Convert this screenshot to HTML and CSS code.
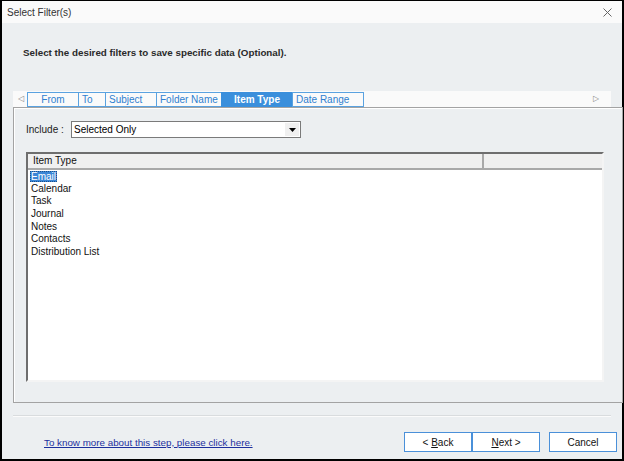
FILE: index.html
```html
<!DOCTYPE html>
<html>
<head>
<meta charset="utf-8">
<link rel="stylesheet" href="styles.css">
</head>
<body>
<div class="window">
  <div class="titlebar">
    <span class="title">Select Filter(s)</span>
    <svg class="close" width="9" height="9" viewBox="0 0 9 9"><path d="M0.5 0.5 L8.5 8.5 M8.5 0.5 L0.5 8.5" stroke="#666" stroke-width="1" fill="none"/></svg>
  </div>
  <div class="content">
    <div class="heading">Select the desired filters to save specific data (Optional).</div>
    <div class="tabstrip">
      <span class="arrow left">&#9665;</span>
      <div class="tabs">
        <span class="tab center w52">From</span>
        <span class="tab w28">To</span>
        <span class="tab w52">Subject</span>
        <span class="tab w66">Folder Name</span>
        <span class="tab center active w72">Item Type</span>
        <span class="tab w72">Date Range</span>
      </div>
      <span class="arrow right">&#9655;</span>
    </div>
    <div class="panel">
      <div class="include-row">
        <span class="include-label">Include :</span>
        <div class="select">
          <span class="select-text">Selected Only</span>
          <span class="select-btn"><svg width="7" height="4" viewBox="0 0 7 4"><path d="M0 0 H7 L3.5 4 Z" fill="#000"/></svg></span>
        </div>
      </div>
      <div class="listview">
        <div class="lv-header">
          <span class="col col1">Item Type</span>
          <span class="col col2"></span>
        </div>
        <div class="lv-body">
          <div class="row"><span class="sel">Email</span></div>
          <div class="row">Calendar</div>
          <div class="row">Task</div>
          <div class="row">Journal</div>
          <div class="row">Notes</div>
          <div class="row">Contacts</div>
          <div class="row">Distribution List</div>
        </div>
      </div>
    </div>
    <div class="separator"></div>
    <div class="footer">
      <a class="help" href="#">To know more about this step, please click here.</a>
      <div class="buttons">
        <div class="btn-pair">
          <span class="btn"><span>&lt; <u>B</u>ack</span></span>
          <span class="btn"><span><u>N</u>ext &gt;</span></span>
        </div>
        <span class="btn"><span>Cancel</span></span>
      </div>
    </div>
  </div>
</div>
</body>
</html>
```
FILE: styles.css
```css
html, body {
  margin: 0;
  padding: 0;
}
body {
  background: #000;
  width: 624px;
  height: 461px;
  overflow: hidden;
  font-family: "Liberation Sans", Arial, sans-serif;
  font-size: 10px;
  color: #1a1a1a;
}
.window {
  margin: 1px 2px 2px 2px;
  height: 458px;
  background: #eceff1;
  display: flex;
  flex-direction: column;
}
.titlebar {
  height: 22px;
  flex: none;
  background: #fafafa;
  display: flex;
  align-items: center;
  justify-content: space-between;
  padding: 0 10px 0 5px;
}
.title {
  font-size: 10px;
  color: #333;
}
.close {
  display: block;
}
.content {
  flex: 1;
  display: flex;
  flex-direction: column;
  padding: 0 0 0 11px;
}
.heading {
  margin: 24px 0 0 10px;
  font-weight: bold;
  font-size: 9.8px;
  line-height: 12px;
  color: #2a2a2a;
}
.tabstrip {
  margin-top: 32px;
  width: 598px;
  height: 16px;
  background: #fafafa;
  display: flex;
  align-items: flex-end;
}
.arrow {
  font-size: 8px;
  color: #888;
  line-height: 14px;
  align-self: center;
}
.arrow.left {
  width: 15px;
  text-align: center;
}
.arrow.right {
  margin-left: auto;
  width: 18px;
  text-align: left;
}
.tabs {
  display: flex;
  height: 15px;
}
.tab {
  box-sizing: border-box;
  height: 15px;
  border: 1px solid #5aa2e0;
  margin-left: -1px;
  color: #2f7fd0;
  font-size: 10px;
  line-height: 13px;
  padding-left: 3px;
  white-space: nowrap;
  overflow: hidden;
}
.tab.center {
  text-align: center;
  padding-left: 0;
}
.tab.active {
  background: #3a8fdc;
  border-color: #3a8fdc;
  color: #fff;
  font-weight: bold;
}
.w52 { width: 52px; }
.w28 { width: 28px; }
.w66 { width: 66px; }
.w72 { width: 72px; }
.panel {
  width: 596px;
  height: 281px;
  border: 1px solid #a3a3a3;
  box-shadow: inset 1px 1px 0 #fff;
  padding: 13px 0 0 12px;
  box-sizing: content-box;
}
.include-row {
  display: flex;
  align-items: center;
  height: 17px;
}
.include-label {
  width: 45px;
  color: #222;
}
.select {
  width: 228px;
  height: 15px;
  border: 1px solid #7a7a7a;
  background: #fff;
  display: flex;
  align-items: center;
  justify-content: space-between;
}
.select-text {
  padding-left: 2px;
  color: #000;
}
.select-btn {
  width: 14px;
  height: 13px;
  margin-right: 1px;
  background: #f0f0f0;
  display: flex;
  align-items: center;
  justify-content: center;
}
.select-btn svg {
  display: block;
}
.listview {
  margin-top: 14px;
  width: 574px;
  height: 226px;
  border-style: solid;
  border-width: 2px;
  border-color: #6e6e6e #f4f4f4 #f4f4f4 #6e6e6e;
  background: #fff;
  display: flex;
  flex-direction: column;
}
.lv-header {
  height: 14px;
  display: flex;
  background: #f0f0f0;
  border-bottom: 2px solid #a9a9a9;
}
.col {
  line-height: 14px;
  color: #111;
}
.col1 {
  width: 449px;
  padding-left: 5px;
  border-right: 2px solid #a9a9a9;
}
.col2 {
  flex: 1;
}
.lv-body {
  padding: 0 0 0 3px;
}
.row {
  height: 12.7px;
  line-height: 12.7px;
  color: #111;
}
.sel {
  display: inline-block;
  vertical-align: middle;
  background: #3a86d6;
  color: #fff;
  line-height: 11px;
  height: 11px;
  padding: 0 1px;
  margin-left: -1px;
  outline: 1px dotted #1b4f8a;
  outline-offset: -1px;
}
.separator {
  margin-top: 12px;
  width: 598px;
  height: 1px;
  background: #d9dcde;
  border-bottom: 1px solid #fbfbfb;
}
.footer {
  display: flex;
  align-items: center;
  justify-content: space-between;
  margin-top: 15px;
  padding-right: 5px;
}
.help {
  margin-left: 31px;
  color: #1c2f9e;
  font-size: 9.8px;
  text-decoration: underline;
}
.buttons {
  display: flex;
  gap: 9px;
}
.btn-pair {
  display: flex;
}
.btn {
  width: 66px;
  height: 18px;
  border: 1px solid #4a90d9;
  background: #fff;
  display: flex;
  align-items: center;
  justify-content: center;
  color: #111;
}
```
